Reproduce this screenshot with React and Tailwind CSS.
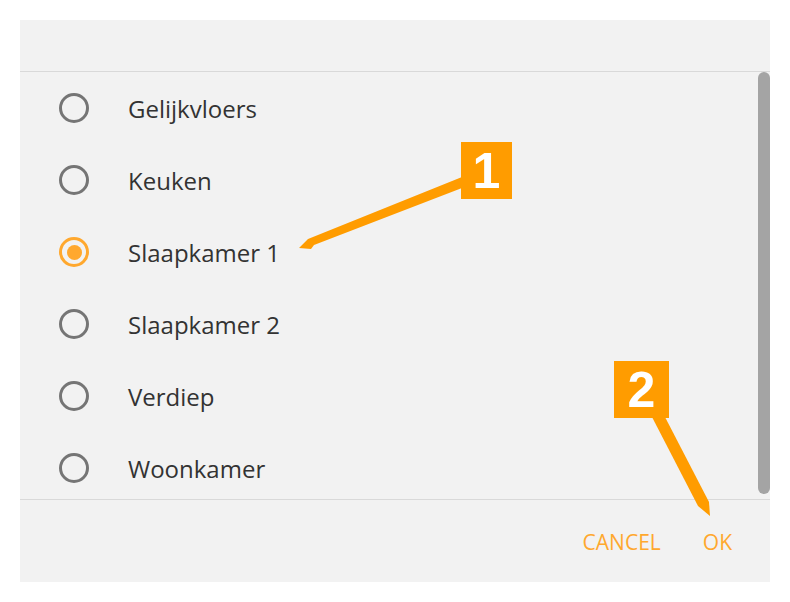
import React from 'react';

const rooms = ['Gelijkvloers', 'Keuken', 'Slaapkamer 1', 'Slaapkamer 2', 'Verdiep', 'Woonkamer'];

const Radio = ({ checked }) => (
  <div
    className={`w-[30px] h-[30px] rounded-full border-[3px] flex items-center justify-center shrink-0 ${
      checked ? 'border-[#ffa82e]' : 'border-[#757575]'
    }`}
  >
    {checked && <div className="w-[15px] h-[15px] rounded-full bg-[#ffa82e]" />}
  </div>
);

const App = () => {
  return (
    <div className="relative w-[790px] h-[602px] bg-white pt-[20px] pl-[20px]" style={{ fontFamily: '"Open Sans", sans-serif' }}>
      <div className="w-[750px] h-[562px] bg-[#f2f2f2] flex flex-col">
        <div className="h-[52px] border-b border-[#d9d9d9] shrink-0" />
        <div className="h-[428px] flex border-b border-[#d9d9d9] overflow-hidden shrink-0">
          <div className="flex-1 flex flex-col">
            {rooms.map((room, i) => (
              <div key={room} className="h-[72px] shrink-0 flex items-center pl-[39px] gap-[39px]">
                <Radio checked={i === 2} />
                <span className="text-[24px] text-[#333333] leading-none pt-[2px]">{room}</span>
              </div>
            ))}
          </div>
          <div className="w-[12px] h-[422px] rounded-full bg-[#a4a4a4] shrink-0" />
        </div>
        <div className="flex-1 flex items-center justify-end pr-[38px] gap-[42px] pt-[4px]">
          <span className="text-[21px] text-[#ffa82e]">CANCEL</span>
          <span className="text-[21px] text-[#ffa82e]">OK</span>
        </div>
      </div>

      {/* annotations */}
      <svg className="absolute inset-0 pointer-events-none" width="790" height="602" viewBox="0 0 790 602">
        <polygon points="462,177 462,188 314,245 311,249 299,248 308,239" fill="#ff9c00" />
        <polygon points="652,417 665,417 709,502 710,516 698,506" fill="#ff9c00" />
      </svg>
      <div
        className="absolute left-[461px] top-[142px] w-[51px] h-[57px] bg-[#ff9c00] text-white font-bold text-[50px] leading-none flex items-center justify-center"
        style={{ fontFamily: '"Liberation Sans", Arial, sans-serif' }}
      >
        1
      </div>
      <div
        className="absolute left-[614px] top-[361px] w-[55px] h-[57px] bg-[#ff9c00] text-white font-bold text-[50px] leading-none flex items-center justify-center"
        style={{ fontFamily: '"Liberation Sans", Arial, sans-serif' }}
      >
        2
      </div>
    </div>
  );
};

export default App;
